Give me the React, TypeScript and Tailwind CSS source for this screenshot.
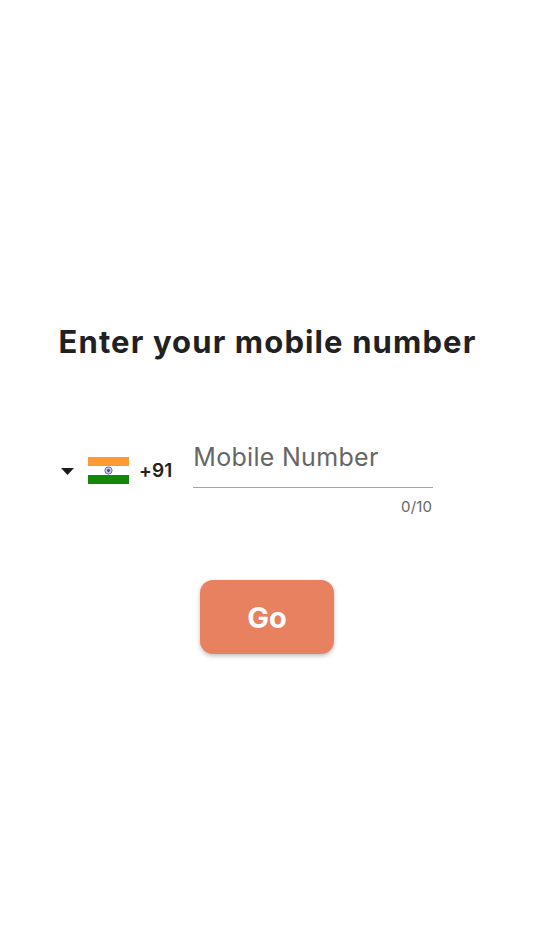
export default function App() {
  return (
    <div className="flex min-h-[950px] w-full flex-col items-center bg-white pt-[322px] font-['Inter',sans-serif]">
      <h1 className="pl-[1px] text-[31px] leading-[40px] font-bold tracking-[1.12px] whitespace-nowrap text-[#212121]">Enter your mobile number</h1>
      <div className="mt-[78px] flex w-full items-start pl-[61px]">
        <div className="mt-[16px] flex h-[30px] items-center">
          <svg width="13" height="7" viewBox="0 0 13 7" className="mt-[1px] mr-[14px]"><path d="M0 0H13L6.5 7Z" fill="#1c1c1c" /></svg>
          <svg width="41" height="27" viewBox="0 0 41 27" className="mr-[10px] mb-[1px]">
            <rect width="41" height="27" fill="#fff" />
            <rect width="41" height="9" fill="#ff9933" />
            <rect y="18" width="41" height="9" fill="#128807" />
            <circle cx="20.5" cy="13.5" r="3.6" fill="#c9c9ee" stroke="#6a6ab0" strokeWidth="1" />
            <circle cx="20.5" cy="13.5" r="1.4" fill="#3a3a9a" />
          </svg>
          <span className="text-[19px] leading-[24px] font-semibold tracking-[0.1px] text-[#212121]">+91</span>
        </div>
        <div className="ml-[21px] w-[240px]">
          <div className="h-[48px] border-b-[1.5px] border-[#a6a6a6]">
            <span className="block pt-[1px] text-[25px] leading-[32px] tracking-[0.3px] text-[#666666]">Mobile Number</span>
          </div>
          <div className="mt-[10px] pr-[1px] text-right text-[15px] leading-[18px] tracking-[0.2px] text-[#666666]">0/10</div>
        </div>
      </div>
      <button className="mt-[64px] flex h-[74px] w-[134px] items-center justify-center rounded-[13px] bg-[#e7815f] pt-[1px] text-[29px] font-bold text-white shadow-[0_2px_4px_rgba(0,0,0,0.25)]">Go</button>
    </div>
  );
}
